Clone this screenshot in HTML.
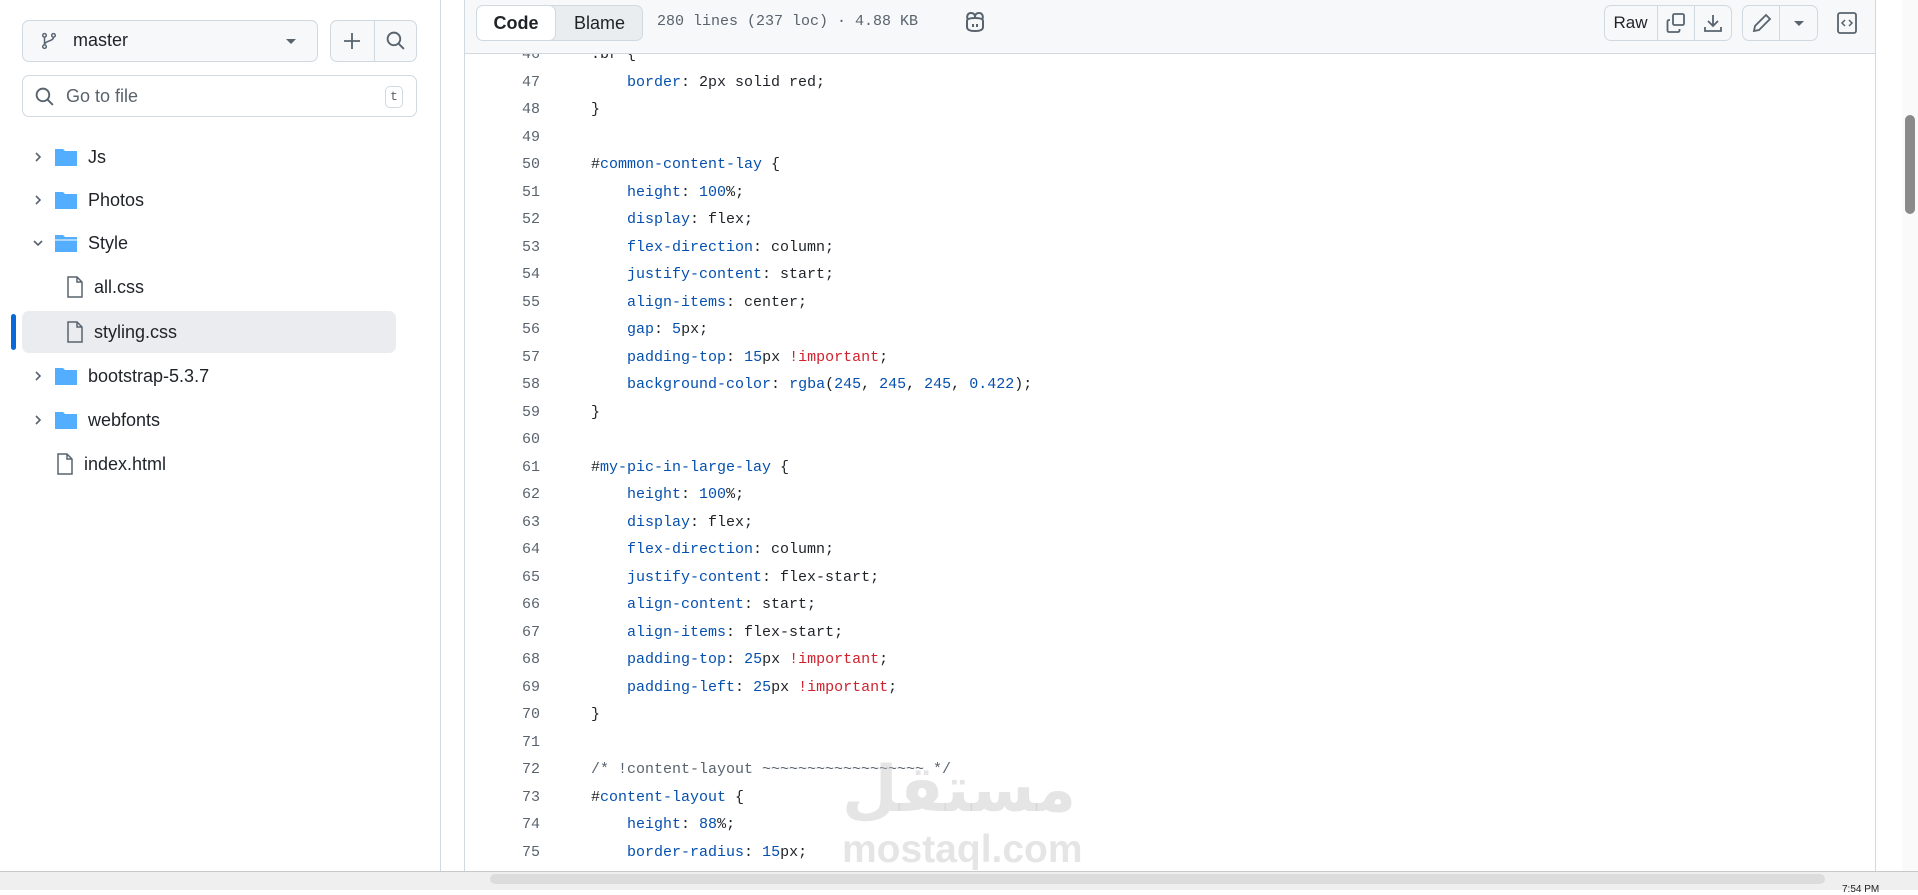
<!DOCTYPE html>
<html><head><meta charset="utf-8"><style>
*{box-sizing:border-box;margin:0;padding:0}
body{width:1918px;height:890px;overflow:hidden;background:#fff;font-family:"Liberation Sans",sans-serif;color:#1f2328;position:relative}
.btn{position:absolute;border:1px solid #d1d9e0;border-radius:7px;background:#f6f8fa}
.row{position:absolute;left:22px;height:42px;width:374px;font-size:18px;display:flex;align-items:center}
.code{position:absolute;left:464px;top:41px;width:1412px;height:830px;overflow:hidden;font-family:"Liberation Mono",monospace;font-size:15px}
.ln{position:absolute;left:0;width:76px;text-align:right;color:#59636e}
.l{position:absolute;left:127px;white-space:pre;color:#1f2328}
.k{color:#0550ae}.r{color:#cf222e}.c{color:#59636e}
.chev{width:32px;display:flex;justify-content:center}
</style></head><body>
<div class="btn" style="left:22px;top:20px;width:296px;height:42px"></div>
<svg style="position:absolute;left:40px;top:31px" width="18" height="20" viewBox="0 0 16 16" fill="none" stroke="#59636e" stroke-width="1.3"><circle cx="4" cy="3" r="1.6"/><circle cx="12" cy="3" r="1.6"/><circle cx="4" cy="13" r="1.6"/><path d="M4 4.6v6.8M12 4.6c0 4-8 3-8 6.8"/></svg>
<div style="position:absolute;left:73px;top:30px;font-size:18px">master</div>
<div style="position:absolute;left:286px;top:39px;border-left:5px solid transparent;border-right:5px solid transparent;border-top:5px solid #59636e"></div>
<div class="btn" style="left:330px;top:20px;width:87px;height:42px"></div>
<div style="position:absolute;left:374px;top:21px;width:1px;height:40px;background:#d1d9e0"></div>
<svg style="position:absolute;left:342px;top:31px" width="20" height="20" viewBox="0 0 20 20" stroke="#59636e" stroke-width="1.8"><path d="M10 2v16M2 10h16"/></svg>
<svg style="position:absolute;left:385px;top:30px" width="21" height="21" viewBox="0 0 20 20" fill="none" stroke="#59636e" stroke-width="1.8"><circle cx="8.5" cy="8.5" r="6"/><path d="M13 13l5 5"/></svg>
<div style="position:absolute;left:22px;top:75px;width:395px;height:42px;border:1px solid #d1d9e0;border-radius:7px"></div>
<svg style="position:absolute;left:34px;top:86px" width="21" height="21" viewBox="0 0 20 20" fill="none" stroke="#59636e" stroke-width="1.8"><circle cx="8.5" cy="8.5" r="6"/><path d="M13 13l5 5"/></svg>
<div style="position:absolute;left:66px;top:86px;font-size:18px;color:#59636e">Go to file</div>
<div style="position:absolute;left:385px;top:86px;width:18px;height:22px;border:1px solid #d1d9e0;border-radius:5px;font-size:13px;text-align:center;line-height:20px;font-family:'Liberation Mono',monospace;color:#59636e">t</div>

<div style="position:absolute;left:22px;top:311px;width:374px;height:42px;background:#eaecef;border-radius:7px"></div>
<div style="position:absolute;left:11px;top:314px;width:5px;height:36px;background:#0969da;border-radius:3px"></div>

<div class="row" style="top:136px"><span class="chev"><svg width="12" height="12" viewBox="0 0 12 12" fill="none" stroke="#59636e" stroke-width="1.6"><path d="M4 2l4 4-4 4"/></svg></span><svg width="24" height="20" viewBox="0 0 24 20"><path d="M1 2h8l2 2h12v15H1z" fill="#54aeff"/></svg><span style="margin-left:10px">Js</span></div>
<div class="row" style="top:179px"><span class="chev"><svg width="12" height="12" viewBox="0 0 12 12" fill="none" stroke="#59636e" stroke-width="1.6"><path d="M4 2l4 4-4 4"/></svg></span><svg width="24" height="20" viewBox="0 0 24 20"><path d="M1 2h8l2 2h12v15H1z" fill="#54aeff"/></svg><span style="margin-left:10px">Photos</span></div>
<div class="row" style="top:222px"><span class="chev"><svg width="12" height="12" viewBox="0 0 12 12" fill="none" stroke="#59636e" stroke-width="1.6"><path d="M2 4l4 4 4-4"/></svg></span><svg width="24" height="20" viewBox="0 0 24 20"><path d="M1 2h8l2 2h12v15H1z" fill="#54aeff"/><path d="M1 7h22" stroke="#fff"/></svg><span style="margin-left:10px">Style</span></div>
<div class="row" style="top:266px"><span style="width:44px"></span><svg width="18" height="22" viewBox="0 0 18 22" fill="none" stroke="#59636e" stroke-width="1.5"><path d="M2 1h9l5 5v15H2zM11 1v5h5"/></svg><span style="margin-left:10px">all.css</span></div>
<div class="row" style="top:311px"><span style="width:44px"></span><svg width="18" height="22" viewBox="0 0 18 22" fill="none" stroke="#59636e" stroke-width="1.5"><path d="M2 1h9l5 5v15H2zM11 1v5h5"/></svg><span style="margin-left:10px">styling.css</span></div>
<div class="row" style="top:355px"><span class="chev"><svg width="12" height="12" viewBox="0 0 12 12" fill="none" stroke="#59636e" stroke-width="1.6"><path d="M4 2l4 4-4 4"/></svg></span><svg width="24" height="20" viewBox="0 0 24 20"><path d="M1 2h8l2 2h12v15H1z" fill="#54aeff"/></svg><span style="margin-left:10px">bootstrap-5.3.7</span></div>
<div class="row" style="top:399px"><span class="chev"><svg width="12" height="12" viewBox="0 0 12 12" fill="none" stroke="#59636e" stroke-width="1.6"><path d="M4 2l4 4-4 4"/></svg></span><svg width="24" height="20" viewBox="0 0 24 20"><path d="M1 2h8l2 2h12v15H1z" fill="#54aeff"/></svg><span style="margin-left:10px">webfonts</span></div>
<div class="row" style="top:443px"><span style="width:34px"></span><svg width="18" height="22" viewBox="0 0 18 22" fill="none" stroke="#59636e" stroke-width="1.5"><path d="M2 1h9l5 5v15H2zM11 1v5h5"/></svg><span style="margin-left:10px">index.html</span></div>

<div style="position:absolute;left:440px;top:0;width:1px;height:871px;background:#d1d9e0"></div>

<div style="position:absolute;left:464px;top:0;width:1412px;height:871px;border-left:1px solid #d1d9e0;border-right:1px solid #d1d9e0"></div>
<div class="code" id="c"></div>
<div style="position:absolute;left:464px;top:0;width:1412px;height:54px;background:#f6f8fa;border:1px solid #d1d9e0;border-top:none"></div>
<div style="position:absolute;left:476px;top:5px;width:167px;height:36px;background:#eaedf0;border:1px solid #d1d9e0;border-radius:7px"></div>
<div style="position:absolute;left:476px;top:5px;width:80px;height:36px;background:#fff;border:1px solid #d1d9e0;border-radius:7px;font-size:18px;font-weight:bold;text-align:center;line-height:34px">Code</div>
<div style="position:absolute;left:556px;top:5px;width:87px;height:36px;font-size:18px;text-align:center;line-height:36px">Blame</div>
<div style="position:absolute;left:657px;top:13px;font-family:'Liberation Mono',monospace;font-size:15px;color:#59636e">280 lines (237 loc) · 4.88 KB</div>
<svg style="position:absolute;left:964px;top:11px" width="22" height="22" viewBox="0 0 22 22" fill="none" stroke="#59636e" stroke-width="2"><path d="M4 9c-2-4 0-7 3-7s4 2 4 4c0-2 1-4 4-4s5 3 3 7M3 10v6c0 3 3 4 8 4s8-1 8-4v-6c0-2-2-3-8-3S3 8 3 10z"/><path d="M9 13v3M13 13v3"/></svg>
<div class="btn" style="left:1604px;top:5px;width:128px;height:36px;background:#f6f8fa"></div>
<div style="position:absolute;left:1657px;top:6px;width:1px;height:34px;background:#d1d9e0"></div>
<div style="position:absolute;left:1694px;top:6px;width:1px;height:34px;background:#d1d9e0"></div>
<div style="position:absolute;left:1604px;top:13px;width:53px;text-align:center;font-size:17px">Raw</div>
<svg style="position:absolute;left:1665px;top:12px" width="22" height="22" viewBox="0 0 22 22" fill="none" stroke="#59636e" stroke-width="1.8"><rect x="8" y="2" width="11" height="11" rx="1.5"/><path d="M5 8H4a1.5 1.5 0 0 0-1.5 1.5v9A1.5 1.5 0 0 0 4 20h9a1.5 1.5 0 0 0 1.5-1.5V17"/></svg>
<svg style="position:absolute;left:1702px;top:12px" width="22" height="22" viewBox="0 0 22 22" fill="none" stroke="#59636e" stroke-width="1.8"><path d="M11 3v11M6 9l5 5 5-5M3 15v4h16v-4"/></svg>
<div class="btn" style="left:1742px;top:5px;width:76px;height:36px"></div>
<div style="position:absolute;left:1779px;top:6px;width:1px;height:34px;background:#d1d9e0"></div>
<svg style="position:absolute;left:1751px;top:12px" width="22" height="22" viewBox="0 0 22 22" fill="none" stroke="#59636e" stroke-width="1.8"><path d="M15 3l4 4L8 18l-5 1 1-5z"/></svg>
<div style="position:absolute;left:1794px;top:21px;border-left:5px solid transparent;border-right:5px solid transparent;border-top:5px solid #59636e"></div>
<svg style="position:absolute;left:1836px;top:11px" width="22" height="24" viewBox="0 0 22 24" fill="none" stroke="#59636e" stroke-width="1.8"><rect x="2" y="2" width="18" height="20" rx="2"/><path d="M9 9l-3 3 3 3M13 9l3 3-3 3" stroke-width="1.5"/></svg>

<div style="position:absolute;left:842px;top:752px;font-family:'Noto Sans CJK SC','DejaVu Sans',sans-serif;font-size:64px;font-weight:bold;color:rgba(190,190,190,0.4);line-height:1">مستقل</div>
<div style="position:absolute;left:842px;top:830px;font-size:39px;font-weight:bold;color:rgba(190,190,190,0.4);line-height:1">mostaql.com</div>

<div style="position:absolute;left:1902px;top:0;width:16px;height:871px;background:#fafafa"></div>
<div style="position:absolute;left:1905px;top:115px;width:10px;height:99px;background:#8a8a8a;border-radius:5px"></div>
<div style="position:absolute;left:0;top:871px;width:1918px;height:19px;background:#efefef;border-top:1px solid #c8c8c8"></div>
<div style="position:absolute;left:490px;top:874px;width:1335px;height:10px;background:#dcdcdc;border-radius:5px"></div>
<div style="position:absolute;left:1842px;top:884px;font-size:10px;color:#222">7:54 PM</div>

<script>
var L=[[46,'.br {'],
[47,'    <span class="k">border</span>: 2px solid red;'],
[48,'}'],[49,''],
[50,'#<span class="k">common-content-lay</span> {'],
[51,'    <span class="k">height</span>: <span class="k">100</span>%;'],
[52,'    <span class="k">display</span>: flex;'],
[53,'    <span class="k">flex-direction</span>: column;'],
[54,'    <span class="k">justify-content</span>: start;'],
[55,'    <span class="k">align-items</span>: center;'],
[56,'    <span class="k">gap</span>: <span class="k">5</span>px;'],
[57,'    <span class="k">padding-top</span>: <span class="k">15</span>px <span class="r">!important</span>;'],
[58,'    <span class="k">background-color</span>: <span class="k">rgba</span>(<span class="k">245</span>, <span class="k">245</span>, <span class="k">245</span>, <span class="k">0.422</span>);'],
[59,'}'],[60,''],
[61,'#<span class="k">my-pic-in-large-lay</span> {'],
[62,'    <span class="k">height</span>: <span class="k">100</span>%;'],
[63,'    <span class="k">display</span>: flex;'],
[64,'    <span class="k">flex-direction</span>: column;'],
[65,'    <span class="k">justify-content</span>: flex-start;'],
[66,'    <span class="k">align-content</span>: start;'],
[67,'    <span class="k">align-items</span>: flex-start;'],
[68,'    <span class="k">padding-top</span>: <span class="k">25</span>px <span class="r">!important</span>;'],
[69,'    <span class="k">padding-left</span>: <span class="k">25</span>px <span class="r">!important</span>;'],
[70,'}'],[71,''],
[72,'<span class="c">/* !content-layout ~~~~~~~~~~~~~~~~~~ */</span>'],
[73,'#<span class="k">content-layout</span> {'],
[74,'    <span class="k">height</span>: <span class="k">88</span>%;'],
[75,'    <span class="k">border-radius</span>: <span class="k">15</span>px;'],
[76,'    <span class="k">overflow</span>: hidden;']];
var h='';
L.forEach(function(a){var t=(a[0]-46)*27.5+5;h+='<div class="ln" style="top:'+t+'px">'+a[0]+'</div><div class="l" style="top:'+t+'px">'+a[1]+'</div>';});
document.getElementById('c').innerHTML=h;
</script>
</body></html>
